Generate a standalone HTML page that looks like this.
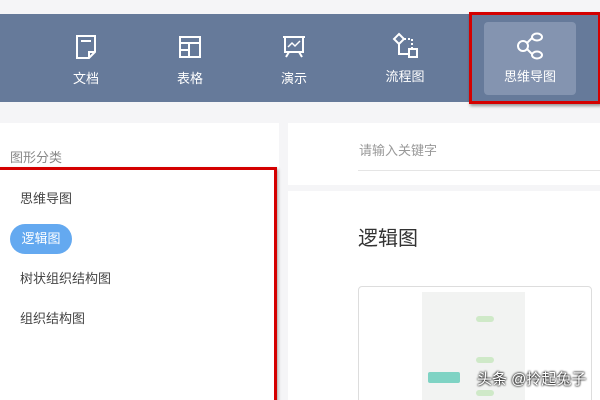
<!DOCTYPE html><html style="height:400px;overflow:hidden"><head><style>
body{margin:0;width:600px;height:400px;overflow:hidden;background:#f5f5f7;font-family:"Liberation Sans","Noto Sans CJK SC",sans-serif;position:relative}
.a{position:absolute}
.bar{left:0;top:14px;width:600px;height:88px;background:#667a9a}
.it{top:14px;height:88px;width:80px;color:#fff;font-size:13px;text-align:center}
.it svg{display:block;margin:20px auto 8px}
.act{left:484px;top:22px;width:92px;height:73px;background:#8494b0;border-radius:4px}
.red{border:3px solid #d40000;box-shadow:1px 2px 3px rgba(0,0,0,.4)}
</style></head><body>
<div class="a bar"></div>
<div class="a act"></div>
<div class="a it" style="left:46px"><svg width="24" height="26" viewBox="0 0 24 26" fill="none" stroke="#fff" stroke-width="2"><path d="M3 2h18v16l-6 6H3z"/><path d="M7 7h10"/><path d="M15 24v-6h6"/></svg>文档</div>
<div class="a it" style="left:150px"><svg width="24" height="26" viewBox="0 0 24 26" fill="none" stroke="#fff" stroke-width="2"><rect x="2" y="3" width="20" height="20"/><path d="M2 9h20M11 9v14M2 16h9"/></svg>表格</div>
<div class="a it" style="left:254px"><svg width="26" height="26" viewBox="0 0 26 26" fill="none" stroke="#fff" stroke-width="2"><path d="M2 3h22M4 3v15h18V3M8 18l-3 5M18 18l3 5"/><path d="M7 13l4-4 3 3 5-5" stroke-width="1.5"/></svg>演示</div>
<div class="a it" style="left:365px"><svg width="28" height="28" viewBox="0 0 28 28" fill="none" stroke="#fff" stroke-width="2" style="margin:18px auto 6px"><path d="M8 2l5 5-5 5-5-5z"/><path d="M8 12v10h10"/><rect x="18" y="17" width="8" height="8"/><path d="M13 7h8v9" stroke-dasharray="2 2"/></svg>流程图</div>
<div class="a it" style="left:490px;width:80px"><svg width="30" height="28" viewBox="0 0 30 28" fill="none" stroke="#fff" stroke-width="2" style="margin:18px auto 6px"><circle cx="8" cy="14" r="5"/><ellipse cx="22" cy="5" rx="5" ry="3.5"/><ellipse cx="22" cy="23" rx="5" ry="3.5"/><path d="M12 11l5-5M12 17l5 5"/></svg>思维导图</div>
<div class="a red" style="left:469px;top:12px;width:126px;height:86px"></div>
<div class="a" style="left:0;top:123px;width:279px;height:277px;background:#fff"></div>
<div class="a" style="left:288px;top:123px;width:312px;height:277px;background:#fff"></div>
<div class="a" style="left:10px;top:147px;font-size:13px;color:#888">图形分类</div>
<div class="a red" style="left:-3px;top:167px;width:274px;height:240px"></div>
<div class="a" style="left:20px;top:188px;font-size:13px;color:#444">思维导图</div>
<div class="a" style="left:10px;top:224px;width:62px;height:30px;border-radius:15px;background:#64a9f0;color:#fff;font-size:13px;line-height:30px;text-align:center">逻辑图</div>
<div class="a" style="left:20px;top:268px;font-size:13px;color:#444">树状组织结构图</div>
<div class="a" style="left:20px;top:308px;font-size:13px;color:#444">组织结构图</div>
<div class="a" style="left:359px;top:140px;font-size:13px;color:#999">请输入关键字</div>
<div class="a" style="left:358px;top:170px;width:242px;height:1px;background:#e5e5e5"></div>
<div class="a" style="left:288px;top:185px;width:312px;height:6px;background:#f5f5f7"></div>
<div class="a" style="left:358px;top:222px;font-size:20px;color:#333">逻辑图</div>
<div class="a" style="left:358px;top:286px;width:232px;height:120px;border:1px solid #ddd;border-radius:4px;background:#fff"></div>
<div class="a" style="left:422px;top:292px;width:103px;height:108px;background:#f2f3f2"></div>
<div class="a" style="left:428px;top:372px;width:32px;height:11px;background:#7fd3c4;border-radius:2px"></div>
<div class="a" style="left:476px;top:316px;width:18px;height:6px;background:#cfe9c8;border-radius:3px"></div>
<div class="a" style="left:476px;top:357px;width:18px;height:6px;background:#cfe9c8;border-radius:3px"></div>
<div class="a" style="left:476px;top:390px;width:18px;height:6px;background:#cfe9c8;border-radius:3px"></div>
<div class="a" style="left:477px;top:368px;font-size:15px;color:#fff;text-shadow:0 0 2px #000,0 0 2px #000">头条 @拎起兔子</div>
</body></html>
